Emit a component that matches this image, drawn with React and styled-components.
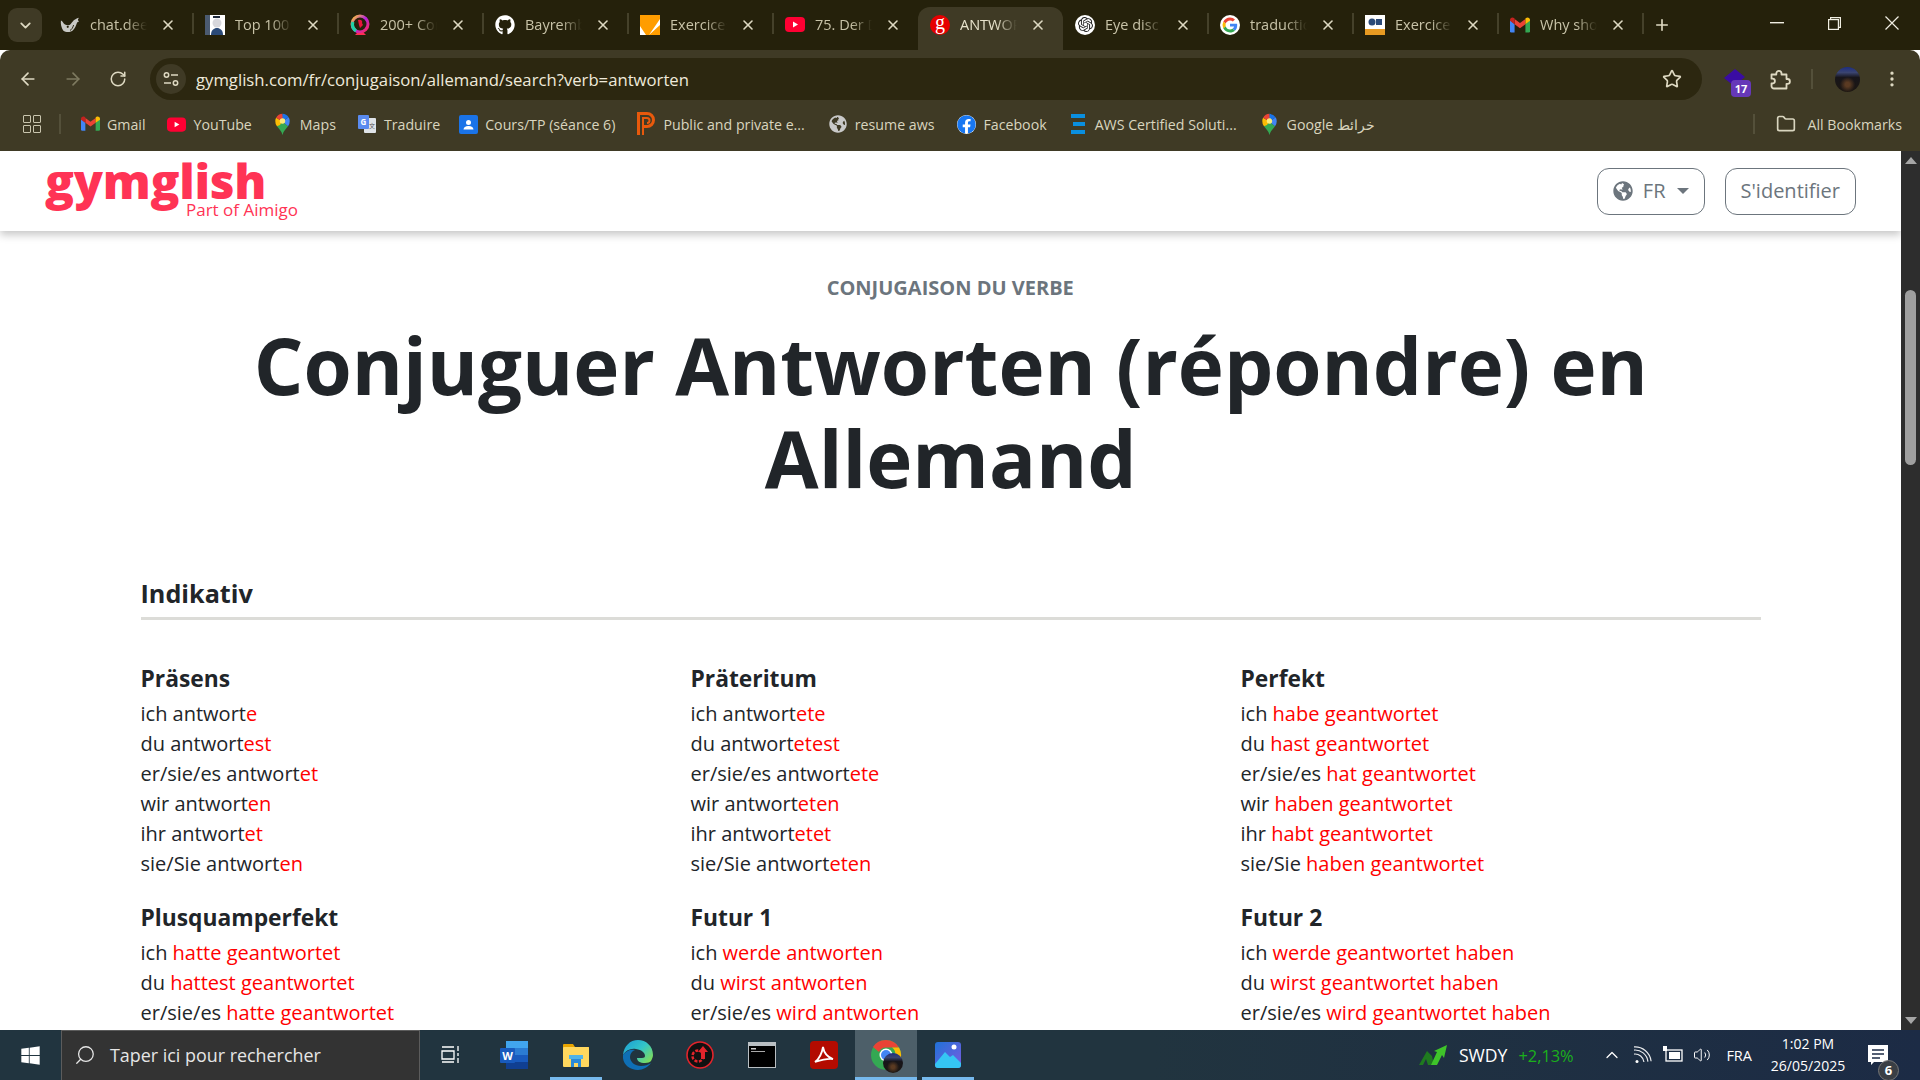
import React from "react";
import styled, { createGlobalStyle } from "styled-components";
import { FaGlobeAmericas, FaGithub, FaFacebook, FaWindows } from "react-icons/fa";
import { SiOpenai } from "react-icons/si";
import { ArrowLeft, ArrowRight, RotateCw, Star, EllipsisVertical, ChevronDown, X, Plus, Search, Folder, ChevronUp, Volume2 } from "lucide-react";

const Global = createGlobalStyle`
  html, body { margin: 0; padding: 0; height: 100%; overflow: hidden; background: #fff; }
  * { box-sizing: border-box; }
  body { font-family: "Open Sans", "Noto Sans", sans-serif; }
`;

const Screen = styled.div`
  width: 1920px; height: 1080px; display: flex; flex-direction: column; overflow: hidden;
`;

/* ---------- browser chrome ---------- */
const TabStrip = styled.div`
  height: 50px; background: #25210b; display: flex; align-items: flex-end; flex: none;
  padding-left: 8px;
`;
const TabSearch = styled.div`
  width: 34px; height: 34px; align-self: flex-start; margin-top: 8px; margin-right: 6px;
  border-radius: 9px; background: #3f3a25; color: #ded9c2;
  display: flex; align-items: center; justify-content: center;
`;
const Tab = styled.div`
  width: 145px; height: 43px; display: flex; align-items: center; position: relative;
  padding: 0 12px 8px 12px; border-radius: 12px 12px 0 0;
  background: ${p => (p.$active ? "#3f3a25" : "transparent")};
  color: ${p => (p.$active ? "#e8e3cc" : "#c8c3a8")};
  &::after {
    content: ""; position: absolute; right: -1px; top: 6px; width: 2px; height: 21px;
    background: ${p => (p.$sep ? "#45412a" : "transparent")};
  }
`;
const TabIcon = styled.span`
  width: 20px; height: 20px; flex: none; display: flex; align-items: center; justify-content: center;
`;
const TabTitle = styled.span`
  width: 60px; margin-left: 10px; flex: none; font-size: 14.5px; white-space: nowrap; overflow: hidden;
  -webkit-mask-image: linear-gradient(90deg, #000 60%, transparent 95%);
  mask-image: linear-gradient(90deg, #000 60%, transparent 95%);
`;
const TabClose = styled.span`
  margin-left: 10px; display: flex; color: #ded9c2;
`;
const NewTab = styled.span`
  margin-left: 10px; height: 43px; padding-bottom: 8px; display: flex; align-items: center; color: #ded9c2;
`;
const WindowControls = styled.div`
  margin-left: auto; align-self: flex-start; display: flex; height: 50px; align-items: center; color: #f0eee2;
  padding-right: 21px; gap: 44px; padding-bottom: 4px;
`;

const Toolbar = styled.div`
  height: 50px; flex: none; background: #3f3a25; border-radius: 10px 10px 0 0;
  display: flex; align-items: flex-end; padding-left: 18px; color: #ded9c2;
`;
const NavButton = styled.span`
  width: 20px; height: 42px; margin-right: 25px; display: flex; align-items: center; justify-content: center;
  color: ${p => (p.$dim ? "#7e7a60" : "#ded9c2")};
  &:nth-child(3) { margin-right: 22px; }
`;
const Omnibox = styled.div`
  width: 1552px; height: 42px; border-radius: 21px; background: #2c2710; display: flex; align-items: center;
  padding: 0 20px 0 6px;
`;
const SiteInfo = styled.span`
  width: 30px; height: 30px; border-radius: 50%; background: #3f3a25; display: flex; align-items: center; justify-content: center; flex: none;
`;
const Url = styled.span`
  margin-left: 10px; color: #efeadb; font-size: 16.7px; flex: 1; white-space: nowrap;
`;
const ToolIcons = styled.div`
  display: flex; align-items: center; height: 42px; margin-left: 22px; position: relative;
`;
const ExtBadge = styled.span`
  position: absolute; left: 7px; top: 22px; width: 20px; height: 17px; border-radius: 4px; background: #6638b8;
  color: #fff; font-size: 11px; font-weight: 700; text-align: center; line-height: 17px;
`;
const ToolSep = styled.span`
  width: 2px; height: 20px; background: #54503a; margin: 0 22px 0 20px;
`;
const Avatar = styled.span`
  width: 25px; height: 25px; border-radius: 50%; display: block;
  background: radial-gradient(circle at 50% 70%, #5a3a22 0 10%, transparent 35%),
    linear-gradient(180deg, #1d2d80 0%, #3a4470 22%, #17151a 42%, #1d1712 100%);
`;

const BookmarkBar = styled.div`
  height: 51px; flex: none; background: #3f3a25; display: flex; align-items: center; color: #d9d5bf;
  padding: 0 0 3px 23px; font-size: 14.2px; white-space: nowrap; position: relative;
`;
const AppGrid = styled.span`
  width: 18px; height: 18px; display: grid; grid-template-columns: 1fr 1fr; gap: 2px;
  & > i { display: block; border: 1.6px solid #c9c5ae; border-radius: 1px; }
`;
const BarSep = styled.span`
  width: 2px; height: 20px; background: #54503a; margin: ${p => p.$m || "0 19px 0 18px"};
`;
const Bookmark = styled.span`
  display: flex; align-items: center; gap: 7px; margin-right: ${p => p.$mr}px;
`;
const BookmarkIcon = styled.span`
  width: 20px; height: 24px; display: flex; align-items: center; justify-content: center;
`;
const AllBookmarks = styled.span`
  margin-left: auto; display: flex; align-items: center; gap: 11px; padding-right: 18px; color: #d9d5bf;
`;

/* ---------- viewport ---------- */
const Viewport = styled.div`
  flex: 1; min-height: 0; display: flex; background: #fff;
`;
const Page = styled.div`
  flex: 1; min-width: 0; overflow: hidden; color: #212529;
`;
const Scrollbar = styled.div`
  width: 19px; flex: none; background: #2d2d2d; display: flex; flex-direction: column; align-items: center;
  padding-top: 139px; position: relative;
  &::before, &::after {
    content: ""; position: absolute; left: 4px; width: 0; height: 0;
    border-left: 6px solid transparent; border-right: 6px solid transparent;
  }
  &::before { top: 6px; border-bottom: 7px solid #a6a6a6; }
  &::after { bottom: 6px; border-top: 7px solid #a6a6a6; }
`;
const Thumb = styled.div`
  width: 11px; height: 175px; border-radius: 6px; background: #9f9f9f;
`;
const Header = styled.header`
  height: 80px; display: flex; align-items: center; padding: 0 45px; justify-content: space-between;
  box-shadow: 0 4px 8px rgba(0,0,0,.22); position: relative;
`;
const Logo = styled.div`
  display: flex; flex-direction: column; color: #ff3355; width: 255px; margin-top: -6px;
`;
const LogoWord = styled.span`
  font-size: 48px; font-weight: 800; line-height: 48px; letter-spacing: -.3px; height: 48px;
`;
const LogoTag = styled.span`
  font-size: 17px; line-height: 20px; margin: -5px 0 0 141px; white-space: nowrap;
`;
const HeaderActions = styled.div`
  display: flex; gap: 20px;
`;
const OutlineButton = styled.button`
  height: 47px; padding: 0 15px 1px; background: #fff; border: 1px solid #6c757d; border-radius: 12px;
  color: #6c757d; font: 400 20px "Open Sans", sans-serif; display: flex; align-items: center; gap: 10px;
`;
const Caret = styled.span`
  width: 0; height: 0; border-left: 6px solid transparent; border-right: 6px solid transparent;
  border-top: 6px solid #6c757d; margin-left: 1px;
`;
const Main = styled.main`
  padding: 42px 140px 0 140.5px;
`;
const Eyebrow = styled.div`
  text-align: center; font-weight: 700; font-size: 20px; line-height: 30px; color: #6c757d;
  margin-left: -1px;
`;
const Title = styled.h1`
  margin: 16px 0 0; text-align: center; font-size: 78px; line-height: 93px; font-weight: 700;
`;
const Mood = styled.h2`
  margin: 70px 0 0; font-size: 25.2px; line-height: 36px; font-weight: 700; padding-bottom: 6px;
  border-bottom: 3px solid #dcdcd8; color: #212529;
`;
const TenseGrid = styled.div`
  margin-top: 39px; display: grid; grid-template-columns: 550px 550px 1fr; row-gap: 19px;
`;
const TenseName = styled.h3`
  margin: 0; font-size: 22.8px; line-height: 40px; font-weight: 700;
`;
const Line = styled.div`
  font-size: 20px; line-height: 30px; white-space: nowrap;
`;
const Red = styled.span`
  color: #f00;
`;

/* ---------- taskbar ---------- */
const Taskbar = styled.div`
  height: 50px; flex: none; display: flex; align-items: stretch; color: #fff;
  background: linear-gradient(90deg, #21343f 0%, #21343f 60%, #1c2b45 100%);
`;
const StartBtn = styled.span`
  width: 61px; display: flex; align-items: center; justify-content: center;
`;
const SearchBox = styled.div`
  width: 359px; background: #333; border: 1px solid #5c5c5c; border-bottom: none; display: flex; align-items: center;
  padding: 0 0 2px 12px; gap: 14px; font-size: 17.9px; color: #e6e6e6;
`;
const TaskItem = styled.span`
  width: ${p => p.$w || 62}px; display: flex; align-items: center; justify-content: center; position: relative;
  background: ${p => (p.$active ? "#4d5f69" : "transparent")};
  &::after {
    content: ""; position: absolute; left: ${p => (p.$active ? 0 : 5)}px; right: ${p => (p.$active ? 0 : 5)}px; bottom: 0; height: 3px;
    background: ${p => (p.$run ? "#76b9ed" : "transparent")};
  }
`;
const Tray = styled.div`
  margin-left: auto; display: flex; align-items: center;
`;
const Ticker = styled.span`
  font-size: 17.6px; margin-left: 12px;
`;
const TickerDelta = styled.span`
  font-size: 16.4px; color: #1bb01b; margin-left: 11px; width: 55px; overflow: hidden; white-space: nowrap;
`;
const TrayIcon = styled.span`
  display: flex; margin-left: ${p => p.$ml}px;
`;
const Lang = styled.span`
  font-size: 14.5px; margin-left: 15px;
`;
const Clock = styled.div`
  margin-left: 11px; width: 90px; text-align: center; font-size: 14px; line-height: 22px;
`;
const Notify = styled.span`
  margin-left: 15px; width: 52px; position: relative; display: flex; align-items: center;
`;
const NotifyCount = styled.span`
  position: absolute; left: 10px; top: 15px; width: 21px; height: 21px; border-radius: 50%; background: #3a3f45;
  border: 1px solid #777; font-size: 13px; font-weight: 700; line-height: 19px; text-align: center;
`;

/* ---------- favicons ---------- */
const GoogleG = ({ s = 20, ring }) => (
  <svg width={s} height={s} viewBox="0 0 48 48">
    {ring && <circle cx="24" cy="24" r="24" fill="#fff" />}
    <g transform={ring ? "translate(6 6) scale(.75)" : undefined}>
      <path fill="#EA4335" d="M24 9.5c3.5 0 6.700 1.300 9.100 3.500l6.800-6.800C35.800 2.400 30.300 0 24 0 14.600 0 6.500 5.400 2.600 13.200l7.900 6.100C12.400 13.700 17.700 9.500 24 9.500z" />
      <path fill="#4285F4" d="M47 24.500c0-1.600-.1-3.100-.4-4.500H24v9h13c-.6 3-2.300 5.500-4.800 7.200l7.700 6C44.300 38 47 31.900 47 24.500z" />
      <path fill="#FBBC05" d="M10.500 28.700A14.500 14.500 0 0 1 10.500 19.300l-7.900-6.100a24 24 0 0 0 0 21.600z" />
      <path fill="#34A853" d="M24 48c6.500 0 11.900-2.100 15.900-5.800l-7.700-6c-2.200 1.500-5 2.300-8.200 2.300-6.300 0-11.600-4.200-13.500-9.900l-7.900 6.100C6.500 42.600 14.600 48 24 48z" />
    </g>
  </svg>
);
const GmailIcon = ({ s = 20 }) => (
  <svg width={s} height={s * 0.8} viewBox="0 0 24 18">
    <path fill="#4285F4" d="M0 3v13.500A1.500 1.500 0 0 0 1.500 18H5.500V8z" />
    <path fill="#34A853" d="M24 3v13.500a1.500 1.500 0 0 1-1.500 1.500H18.500V8z" />
    <path fill="#EA4335" d="M5.500 8V1.800L12 6.700l6.500-4.900V8L12 12.800z" />
    <path fill="#C5221F" d="M0 3c0-2.500 2.800-3.800 4.800-2.300l.7.600V8L0 4z" />
    <path fill="#FBBC04" d="M24 3c0-2.500-2.800-3.800-4.800-2.300l-.7.600V8L24 4z" />
  </svg>
);
const YouTubeIcon = ({ w = 20, h = 15 }) => (
  <svg width={w} height={h} viewBox="0 0 20 15">
    <rect width="20" height="15" rx="4" fill="#ff0033" />
    <path d="M8 4.500 13 7.500 8 10.500z" fill="#fff" />
  </svg>
);
const MapsIcon = ({ s = 20 }) => (
  <svg width={s} height={s * 1.3} viewBox="0 0 20 26">
    <path fill="#34A853" d="M3.500 15.500c2.500 3.500 5.500 5.500 6.500 10.500 1-5 4-7 6.500-10.500L10 10z" />
    <path fill="#FBBC04" d="M3.500 15.500A9 9 0 0 1 1.500 9.500c0-1.500.3-2.800 1-4L10 10 7 14z" />
    <path fill="#4285F4" d="M16.500 15.500A9 9 0 0 0 18.500 9.500c0-1.700-.4-3.200-1.300-4.500L10 10z" />
    <path fill="#EA4335" d="M2.500 5.500A9 9 0 0 1 10 1l1 5-1 4z" />
    <path fill="#1A73E8" d="M10 1a9 9 0 0 1 7.200 4L10 10z" />
    <circle cx="10" cy="9.500" r="3.200" fill="#FBEA7A" />
  </svg>
);
const TranslateIcon = () => (
  <svg width="20" height="20" viewBox="0 0 20 20">
    <rect x="7" y="4" width="12" height="15" rx="1" fill="#dfe3e8" />
    <rect x="1" y="1" width="11" height="14" rx="1" fill="#5a8bf0" />
    <text x="3.500" y="11" fontSize="8" fontWeight="700" fill="#fff" fontFamily="Open Sans">G</text>
    <text x="12" y="14" fontSize="6" fill="#555" fontFamily="Noto Sans CJK SC">文</text>
  </svg>
);
const ClassroomIcon = () => (
  <svg width="19" height="19" viewBox="0 0 19 19">
    <rect width="19" height="19" rx="2" fill="#1a73e8" />
    <circle cx="9.500" cy="7.500" r="2.500" fill="#fff" />
    <path d="M4.500 14.500c.5-3 3-3.500 5-3.500s4.500.5 5 3.500z" fill="#fff" />
  </svg>
);
const PublicIcon = () => (
  <svg width="18" height="24" viewBox="0 0 18 24">
    <path d="M1.500 23V1.500H10a6.500 6.500 0 0 1 0 13H6" fill="none" stroke="#e8590c" strokeWidth="3" />
    <path d="M6 23V6h4a2.500 2.500 0 0 1 0 5" fill="none" stroke="#e8590c" strokeWidth="2" />
  </svg>
);
const AwsLines = () => (
  <svg width="16" height="20" viewBox="0 0 16 20">
    <rect x="1" width="14" height="4" fill="#0a8fe0" /><rect x="3" y="8" width="12" height="4" fill="#0a8fe0" /><rect x="1" y="16" width="14" height="4" fill="#0a8fe0" />
  </svg>
);
const GlobeGrey = () => <FaGlobeAmericas size={18} color="#c9c9c9" />;
const DeepSeek = () => (
  <svg width="22" height="18" viewBox="0 0 22 18">
    <path d="M1 4c1.500 0 2.500 3 4.500 4.500 2.500 1.500 5 1 6.500-.8 1.500-1.700 2.500-3.700 4.500-4.700C18 2 19.500 1 21 1c-1 1-1.500 2-1 3l1 1.500c-1.200 0-2 .5-2.500 1.500-1 3-2.500 6-4 7.500-2.700 3-8 3-11 .5C1.500 12 .5 8 1 4z" fill="#c9c9c5" />
    <circle cx="8.500" cy="11" r="1.200" fill="#25210b" />
    <path d="M11 15c2-1 3-3 4-6" stroke="#25210b" strokeWidth="1" fill="none" />
  </svg>
);
const Cartoon = () => (
  <svg width="20" height="20" viewBox="0 0 20 20">
    <rect width="20" height="20" fill="#fff" />
    <rect width="5" height="20" fill="#4b5a70" />
    <circle cx="12" cy="8" r="4.500" fill="#d7d7dc" />
    <path d="M6 20c0-5 3-7 6-7s6 2 6 7z" fill="#2b4a78" />
    <rect x="8" y="1" width="7" height="2" fill="#1f2a3c" />
  </svg>
);
const Ring = () => (
  <svg width="20" height="22" viewBox="0 0 20 22">
    <defs>
      <linearGradient id="rg" x1="0" y1="0" x2="1" y2="1">
        <stop offset="0" stopColor="#ffd32a" /><stop offset=".5" stopColor="#b620e0" /><stop offset="1" stopColor="#ff2d55" />
      </linearGradient>
    </defs>
    <circle cx="10" cy="10" r="8" fill="none" stroke="url(#rg)" strokeWidth="3" />
    <path d="M3 8a8 8 0 0 0 3 9" fill="none" stroke="#1fd1a5" strokeWidth="3" />
    <path d="M7 19h7l2 2H5z" fill="#ff2d55" />
    <path d="M8 6c3-1 5 1 4 3l1 2-3 3-1-3z" fill="#e8143c" />
  </svg>
);
const Exercises = () => (
  <svg width="20" height="20" viewBox="0 0 20 20">
    <rect width="20" height="20" fill="#ff9d00" />
    <path d="M0 11 6 20H9L20 4V10L9 20H0z" fill="#fff" />
  </svg>
);
const GymG = () => (
  <svg width="20" height="20" viewBox="0 0 20 20">
    <circle cx="10" cy="10" r="10" fill="#e60000" />
    <text x="10" y="13.500" textAnchor="middle" fontSize="20" fontFamily="Liberation Serif" fill="#fff">g</text>
  </svg>
);
const OpenAi = () => (
  <span style={{ width: 20, height: 20, borderRadius: "50%", background: "#fff", display: "flex", alignItems: "center", justifyContent: "center" }}>
    <SiOpenai size={15} color="#222" />
  </span>
);
const Github = () => (
  <span style={{ width: 20, height: 20, display: "flex" }}><FaGithub size={20} color="#fff" /></span>
);
const Udemy = () => (
  <svg width="20" height="20" viewBox="0 0 20 20">
    <rect width="20" height="20" fill="#fff" />
    <rect y="14" width="20" height="6" fill="#e79a22" />
    <circle cx="7" cy="7" r="3.500" fill="#2b4a78" />
    <rect x="11" y="4" width="6" height="6" fill="#2b4a78" />
  </svg>
);

const Minimize = () => <svg width="14" height="2"><rect width="14" height="1.400" fill="#f0eee2" /></svg>;
const Restore = () => (
  <svg width="13" height="13" viewBox="0 0 13 13" fill="none" stroke="#f0eee2" strokeWidth="1.200">
    <rect x=".6" y="2.600" width="9.800" height="9.800" /><path d="M2.600 2.600V.6h9.800v9.800h-2" />
  </svg>
);
const CloseWin = () => (
  <svg width="14" height="14" viewBox="0 0 14 14" stroke="#f0eee2" strokeWidth="1.200"><path d="M.5.500 13.500 13.500M13.500.5.500 13.500" /></svg>
);
const Tune = () => (
  <svg width="16" height="16" viewBox="0 0 16 16" fill="none" stroke="#ded9c2" strokeWidth="1.500">
    <circle cx="3.500" cy="4" r="2.200" /><path d="M8 4h7M1 12h7" /><circle cx="12.500" cy="12" r="2.200" />
  </svg>
);
const ExtCap = () => (
  <svg width="26" height="20" viewBox="0 0 26 20"><path d="M0 9 11 0 21 8 10 17z" fill="#3a0ca3" /></svg>
);
const PuzzlePiece = () => (
  <svg width="22" height="22" viewBox="0 0 22 22" fill="none" stroke="#ded9c2" strokeWidth="1.800" strokeLinejoin="round" style={{ marginLeft: 19 }}>
    <path d="M2.500 6.500h4.800v-1a2.600 2.600 0 0 1 5.200 0v1h5v4.500h1a2.400 2.400 0 0 1 0 4.800h-1v4.700H5a2.500 2.500 0 0 1-2.500-2.500v-2.500h1a2.400 2.400 0 0 0 0-4.800h-1z" />
  </svg>
);
const CornerWifi = () => (
  <svg width="18" height="18" viewBox="0 0 18 18" fill="none" stroke="#fff" strokeWidth="1.200">
    <path d="M1 8a9 9 0 0 1 9 9M1 4a13 13 0 0 1 13 13M1 .8a16.200 16.200 0 0 1 16.200 16.200" transform="rotate(-6 1 17)" opacity=".9" />
    <circle cx="3" cy="15.500" r="1.500" fill="#fff" stroke="none" />
  </svg>
);
const ActionCenter = () => (
  <svg width="20" height="20" viewBox="0 0 20 20">
    <path d="M0 0h20v17H6l-3 3v-3H0z" fill="#fff" />
    <path d="M4 5h12M4 9h12M4 13h8" stroke="#1c2b45" strokeWidth="1.300" />
  </svg>
);

const WordIcon = () => (
  <svg width="30" height="30" viewBox="0 0 30 30">
    <rect x="7" y="1" width="22" height="7" fill="#41a5ee" /><rect x="7" y="8" width="22" height="7" fill="#2b7cd3" />
    <rect x="7" y="15" width="22" height="7" fill="#185abd" /><rect x="7" y="22" width="22" height="7" fill="#103f91" />
    <rect x="1" y="8" width="15" height="15" rx="1" fill="#185abd" />
    <text x="8.500" y="20" textAnchor="middle" fontSize="11" fontWeight="700" fill="#fff" fontFamily="Open Sans">W</text>
  </svg>
);
const ExplorerIcon = () => (
  <svg width="28" height="26" viewBox="0 0 28 26">
    <path d="M1 3a1 1 0 0 1 1-1h9l2 3h14v3H1z" fill="#e8a400" />
    <rect x="1" y="5" width="26" height="20" rx="1" fill="#ffd75e" />
    <path d="M9 25v-9h10v9h-3v-4h-4v4z" fill="#2b8ad8" />
    <rect x="7" y="13" width="14" height="4" fill="#4fb3ea" />
  </svg>
);
const EdgeIcon = () => (
  <svg width="30" height="30" viewBox="0 0 30 30">
    <defs>
      <linearGradient id="eg" x1="0" y1="0" x2="1" y2=".8"><stop offset="0" stopColor="#1a9ad6" /><stop offset=".55" stopColor="#33c6c8" /><stop offset="1" stopColor="#7fdc5a" /></linearGradient>
    </defs>
    <path d="M15 0C7 0 1 6 0 15c3-5 8-7 13-6 6 1 9 4 9 7 0 1-1 2-3 2H14c0 3 3 5 8 5 3 0 5-1 6-2 1-2 2-4 2-6C30 6 23 0 15 0z" fill="url(#eg)" />
    <path d="M0 15C-1 24 6 30 15 30c5 0 10-3 13-7-3 2-6 3-10 3-6 0-11-4-11-9 0-3 2-6 5-7-5-1-9 1-12 5z" fill="#0f6fb5" />
  </svg>
);
const DriverIcon = () => (
  <svg width="28" height="28" viewBox="0 0 28 28">
    <circle cx="14" cy="14" r="13" fill="#111" stroke="#e3242b" strokeWidth="1.600" />
    <circle cx="12" cy="15" r="5.500" fill="none" stroke="#e3242b" strokeWidth="2.500" strokeDasharray="3 1.500" />
    <path d="M17 5 22 11h-3v7h-4v-7h-3z" fill="#e3242b" />
  </svg>
);
const Terminal = () => (
  <svg width="28" height="26" viewBox="0 0 28 26">
    <rect width="28" height="26" fill="#b9bfc3" /><rect x="1" y="4" width="26" height="21" fill="#000" />
    <rect x="3" y="6" width="5" height="1.500" fill="#ccc" /><rect x="3" y="9" width="14" height="1" fill="#aaa" />
  </svg>
);
const Acrobat = () => (
  <svg width="28" height="28" viewBox="0 0 28 28">
    <rect width="28" height="28" rx="4" fill="#b30b00" />
    <path d="M5 21c4-3 7-9 8-15 1 6 4 10 10 12-6-1-12 1-18 3z" fill="none" stroke="#fff" strokeWidth="1.800" />
  </svg>
);
const ChromeIcon = () => (
  <span style={{ position: "relative", display: "flex" }}>
    <svg width="32" height="32" viewBox="0 0 32 32">
      <circle cx="16" cy="16" r="15" fill="#34a853" />
      <path d="M16 1a15 15 0 0 1 13 7.500H16a7.500 7.500 0 0 0-7 4.500L3 8a15 15 0 0 1 13-7z" fill="#ea4335" />
      <path d="M29 8.500A15 15 0 0 1 16 31l6-10a7.500 7.500 0 0 0 0-12.500z" fill="#fbbc04" />
      <circle cx="16" cy="16" r="6.500" fill="#fff" /><circle cx="16" cy="16" r="5" fill="#4285f4" />
    </svg>
    <Avatar style={{ position: "absolute", left: 13, top: 14, width: 20, height: 20 }} />
  </span>
);
const PhotosIcon = () => (
  <svg width="26" height="26" viewBox="0 0 26 26">
    <defs>
      <linearGradient id="ph" x1="0" y1="0" x2="1" y2="1"><stop offset="0" stopColor="#1f72d8" /><stop offset="1" stopColor="#7a5be0" /></linearGradient>
    </defs>
    <rect width="26" height="26" rx="3" fill="url(#ph)" />
    <circle cx="19" cy="5" r="2.500" fill="#fff" />
    <path d="M0 22 10 10l5 5 3-2 8 8v2a3 3 0 0 1-3 3H3a3 3 0 0 1-3-3z" fill="#35c6f4" />
  </svg>
);
const StockIcon = () => (
  <svg width="28" height="20" viewBox="0 0 28 20">
    <path d="M0 20 8 6l5 5 2 9H9l-2-6-3 6z" fill="#1f7a1f" />
    <path d="M12 20 18 7l-3-1L28 0l-3 13-2-3-5 10z" fill="#3fc42a" />
  </svg>
);

const tabs = [
  ["chat.deepseek", <DeepSeek />], ["Top 100 Best", <Cartoon />], ["200+ Common", <Ring />], ["Bayremb/aws", <Github />],
  ["Exercices", <Exercises />], ["75. Der Dativ", <YouTubeIcon />], ["ANTWORTEN", <GymG />], ["Eye disc", <OpenAi />],
  ["traduction", <GoogleG ring />], ["Exercice", <Udemy />], ["Why should", <GmailIcon />],
];

const bookmarks = [
  ["Gmail", <GmailIcon s={19} />, 21],
  ["YouTube", <YouTubeIcon w={19} h={15} />, 21],
  ["Maps", <MapsIcon s={17} />, 21],
  ["Traduire", <TranslateIcon />, 18],
  ["Cours/TP (séance 6)", <ClassroomIcon />, 21],
  ["Public and private e...", <PublicIcon />, 23],
  ["resume aws", <GlobeGrey />, 22],
  ["Facebook", <FaFacebook size={19} color="#1877f2" style={{ background: "#fff", borderRadius: "50%" }} />, 21],
  ["AWS Certified Soluti...", <AwsLines />, 23],
  ["Google خرائط", <MapsIcon s={17} />, 0],
];

const tenses = [
  ["Präsens", [["ich antwort", "e"], ["du antwort", "est"], ["er/sie/es antwort", "et"], ["wir antwort", "en"], ["ihr antwort", "et"], ["sie/Sie antwort", "en"]]],
  ["Präteritum", [["ich antwort", "ete"], ["du antwort", "etest"], ["er/sie/es antwort", "ete"], ["wir antwort", "eten"], ["ihr antwort", "etet"], ["sie/Sie antwort", "eten"]]],
  ["Perfekt", [["ich ", "habe geantwortet"], ["du ", "hast geantwortet"], ["er/sie/es ", "hat geantwortet"], ["wir ", "haben geantwortet"], ["ihr ", "habt geantwortet"], ["sie/Sie ", "haben geantwortet"]]],
  ["Plusquamperfekt", [["ich ", "hatte geantwortet"], ["du ", "hattest geantwortet"], ["er/sie/es ", "hatte geantwortet"], ["wir ", "hatten geantwortet"], ["ihr ", "hattet geantwortet"], ["sie/Sie ", "hatten geantwortet"]]],
  ["Futur 1", [["ich ", "werde antworten"], ["du ", "wirst antworten"], ["er/sie/es ", "wird antworten"], ["wir ", "werden antworten"], ["ihr ", "werdet antworten"], ["sie/Sie ", "werden antworten"]]],
  ["Futur 2", [["ich ", "werde geantwortet haben"], ["du ", "wirst geantwortet haben"], ["er/sie/es ", "wird geantwortet haben"], ["wir ", "werden geantwortet haben"], ["ihr ", "werdet geantwortet haben"], ["sie/Sie ", "werden geantwortet haben"]]],
];

export default function App() {
  return (
    <Screen>
      <Global />
      <TabStrip>
        <TabSearch><ChevronDown size={17} strokeWidth={2.5} /></TabSearch>
        {tabs.map(([t, icon], i) => (
          <Tab key={t} $active={i === 6} $sep={i !== 5 && i !== 6}>
            <TabIcon>{icon}</TabIcon>
            <TabTitle>{t}</TabTitle>
            <TabClose><X size={16} strokeWidth={2.4} /></TabClose>
          </Tab>
        ))}
        <NewTab><Plus size={18} strokeWidth={2.2} /></NewTab>
        <WindowControls><Minimize /><Restore /><CloseWin /></WindowControls>
      </TabStrip>
      <Toolbar>
        <NavButton><ArrowLeft size={20} /></NavButton>
        <NavButton $dim><ArrowRight size={20} /></NavButton>
        <NavButton><RotateCw size={18} /></NavButton>
        <Omnibox>
          <SiteInfo><Tune /></SiteInfo>
          <Url>gymglish.com/fr/conjugaison/allemand/search?verb=antworten</Url>
          <Star size={20} color="#ded9c2" />
        </Omnibox>
        <ToolIcons>
          <ExtCap />
          <ExtBadge>17</ExtBadge>
          <PuzzlePiece />
          <ToolSep />
          <Avatar />
          <EllipsisVertical size={20} style={{ marginLeft: 22 }} />
        </ToolIcons>
      </Toolbar>
      <BookmarkBar>
        <AppGrid><i /><i /><i /><i /></AppGrid>
        <BarSep />
        {bookmarks.map(([t, icon, mr]) => (
          <Bookmark key={t} $mr={mr}><BookmarkIcon>{icon}</BookmarkIcon>{t}</Bookmark>
        ))}
        <AllBookmarks>
          <BarSep $m="0 10px 0 0" />
          <Folder size={20} />
          All Bookmarks
        </AllBookmarks>
      </BookmarkBar>
      <Viewport>
        <Page>
          <Header>
            <Logo>
              <LogoWord>gymglish</LogoWord>
              <LogoTag>Part of Aimigo</LogoTag>
            </Logo>
            <HeaderActions>
              <OutlineButton><FaGlobeAmericas size={20} />FR<Caret /></OutlineButton>
              <OutlineButton>S'identifier</OutlineButton>
            </HeaderActions>
          </Header>
          <Main>
            <Eyebrow>CONJUGAISON DU VERBE</Eyebrow>
            <Title>Conjuguer Antworten (répondre) en Allemand</Title>
            <Mood>Indikativ</Mood>
            <TenseGrid>
              {tenses.map(([name, lines]) => (
                <div key={name}>
                  <TenseName>{name}</TenseName>
                  {lines.map(([a, b]) => (
                    <Line key={a}>{a}<Red>{b}</Red></Line>
                  ))}
                </div>
              ))}
            </TenseGrid>
          </Main>
        </Page>
        <Scrollbar><Thumb /></Scrollbar>
      </Viewport>
      <Taskbar>
        <StartBtn><FaWindows size={21} /></StartBtn>
        <SearchBox><Search size={22} strokeWidth={1.4} style={{ transform: "scaleX(-1)" }} />Taper ici pour rechercher</SearchBox>
        <TaskItem $w={62}><svg width="20" height="20" viewBox="0 0 20 20" fill="none" stroke="#fff" strokeWidth="1.300"><path d="M1 2h12M1 17h12M1 6h12v8H1z" /><path d="M17 1v5M17 8v3M17 13v5" /></svg></TaskItem>
        <TaskItem $w={63}><WordIcon /></TaskItem>
        <TaskItem $run><ExplorerIcon /></TaskItem>
        <TaskItem><EdgeIcon /></TaskItem>
        <TaskItem><DriverIcon /></TaskItem>
        <TaskItem><Terminal /></TaskItem>
        <TaskItem><Acrobat /></TaskItem>
        <TaskItem $active $run><ChromeIcon /></TaskItem>
        <TaskItem $run><PhotosIcon /></TaskItem>
        <Tray>
          <StockIcon />
          <Ticker>SWDY</Ticker>
          <TickerDelta>+2,13%</TickerDelta>
          <TrayIcon $ml={29}><ChevronUp size={20} strokeWidth={1.5} /></TrayIcon>
          <TrayIcon $ml={12}><CornerWifi /></TrayIcon>
          <TrayIcon $ml={11}><svg width="20" height="18" viewBox="0 0 20 18" fill="#fff"><rect x="3" y="4" width="16" height="11" fill="none" stroke="#fff" strokeWidth="1.300" /><rect x="6" y="6" width="11" height="7" /><rect x="0" y="0" width="4" height="5" /></svg></TrayIcon>
          <TrayIcon $ml={10}><Volume2 size={18} strokeWidth={1.3} /></TrayIcon>
          <Lang>FRA</Lang>
          <Clock>1:02 PM<br />26/05/2025</Clock>
          <Notify>
            <ActionCenter />
            <NotifyCount>6</NotifyCount>
          </Notify>
        </Tray>
      </Taskbar>
    </Screen>
  );
}
